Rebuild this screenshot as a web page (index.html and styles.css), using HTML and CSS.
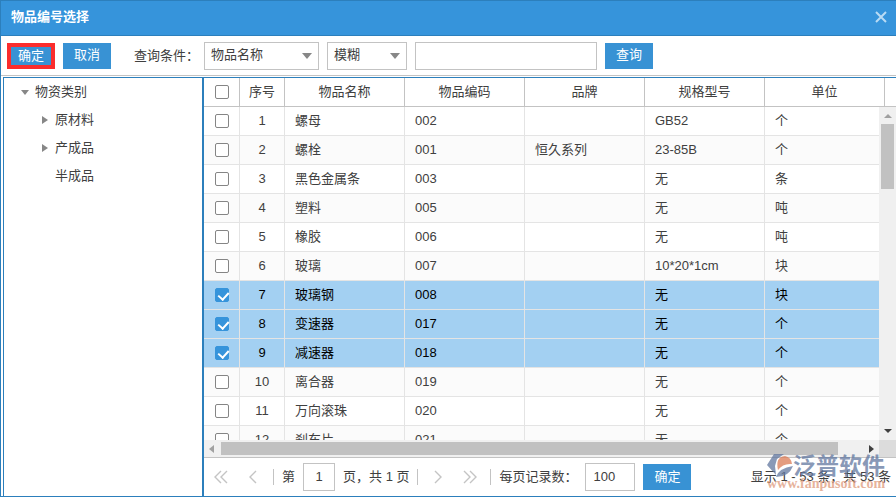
FILE: index.html
```html
<!DOCTYPE html>
<html lang="zh-CN">
<head>
<meta charset="UTF-8">
<meta name="viewport" content="width=device-width,initial-scale=1">
<title>物品编号选择</title>
<link rel="stylesheet" href="styles.css">
</head>
<body>

<div class="dialog">
  <header class="title">
    <h1>物品编号选择</h1>
    <button class="close" aria-label="关闭"><svg width="12" height="12" viewBox="0 0 12 12"><path d="M1 1L11 11M11 1L1 11"/></svg></button>
  </header>

  <form class="toolbar" onsubmit="return false">
    <button class="btn marked">确定</button>
    <button class="btn" type="button">取消</button>
    <label class="query" for="field">查询条件：</label>
    <span class="drop wide"><select id="field"><option>物品名称</option><option>物品编码</option><option>品牌</option></select></span>
    <span class="drop"><select id="mode" aria-label="匹配方式"><option>模糊</option><option>精确</option></select></span>
    <input class="box keyword" type="text" aria-label="关键字">
    <button class="btn" type="button">查询</button>
  </form>

  <div class="main">
    <!-- category tree -->
    <nav class="tree">
      <a class="node open" href="#">物资类别</a>
      <a class="node child" href="#">原材料</a>
      <a class="node child" href="#">产成品</a>
      <a class="node child leaf" href="#">半成品</a>
    </nav>

    <section class="list">
      <div class="head">
        <table>
          <colgroup><col class="c-check"><col class="c-no"><col><col><col><col><col></colgroup>
          <thead><tr><th><input type="checkbox" id="all" aria-label="全选"></th><th>序号</th><th>物品名称</th><th>物品编码</th><th>品牌</th><th>规格型号</th><th>单位</th></tr></thead>
        </table>
      </div>

      <div class="view">
        <div class="rows">
          <table>
            <colgroup><col class="c-check"><col class="c-no"><col><col><col><col><col></colgroup>
            <tbody id="rows"></tbody>
          </table>
        </div>
        <div class="vbar"><i class="arrow up off"></i><div class="thumb"></div><i class="arrow down"></i></div>
        <div class="hbar"><i class="arrow left off"></i><div class="thumb"></div><i class="arrow right"></i></div>
        <div class="corner"></div>
      </div>

      <footer class="pager">
        <button class="nav" aria-label="首页"><svg width="14" height="14" viewBox="0 0 14 14"><path d="M7 1L1 7L7 13M13 1L7 7L13 13"/></svg></button>
        <button class="nav" aria-label="上一页"><svg width="14" height="14" viewBox="0 0 14 14"><path d="M10 1L4 7L10 13"/></svg></button>
        <i class="sep"></i>
        <label for="page">第</label>
        <input class="box page" id="page" type="text" value="1">
        <span>页，共 1 页</span>
        <i class="sep"></i>
        <button class="nav" aria-label="下一页"><svg width="14" height="14" viewBox="0 0 14 14"><path d="M4 1L10 7L4 13"/></svg></button>
        <button class="nav" aria-label="末页"><svg width="14" height="14" viewBox="0 0 14 14"><path d="M1 1L7 7L1 13M7 1L13 7L7 13"/></svg></button>
        <i class="sep"></i>
        <label class="size-label" for="size">每页记录数：</label>
        <input class="box size" id="size" type="text" value="100">
        <button class="btn">确定</button>
        <span class="total">显示 1 - 53 条，共 53 条</span>
      </footer>
    </section>
  </div>

  <!-- watermark -->
  <div class="brand">
    <svg width="26" height="24" viewBox="0 0 26 24">
      <path class="b1" d="M7 0H17L10 5L8 12L9 21L0 11Z"/>
      <path class="b2" d="M11 16Q8 3 18 2Q24 3 25 10Q16 9 11 16Z"/>
      <path class="b1" d="M26 12Q22 23 9 23Q12 14 26 12Z"/>
    </svg>
    <b>泛普软件</b>
    <span>www.fanpusoft.com</span>
  </div>
</div>

<script>
/* ------------ data ------------ */
const items=[
  ['螺母','002','','GB52','个'],
  ['螺栓','001','恒久系列','23-85B','个'],
  ['黑色金属条','003','','无','条'],
  ['塑料','005','','无','吨'],
  ['橡胶','006','','无','吨'],
  ['玻璃','007','','10*20*1cm','块'],
  ['玻璃钢','008','','无','块'],
  ['变速器','017','','无','个'],
  ['减速器','018','','无','个'],
  ['离合器','019','','无','个'],
  ['万向滚珠','020','','无','个'],
  ['刹车片','021','','无','个']
];
const picked=[7,8,9];

/* ------------ build rows ------------ */
const rows=document.getElementById('rows');
items.forEach((item,i)=>{
  const no=i+1,on=picked.includes(no);
  const tr=document.createElement('tr');
  tr.classList.toggle('on',on);
  tr.innerHTML=`<td><input type="checkbox" aria-label="${item[0]}"${on?' checked':''}></td><td>${no}</td>`+item.map(v=>`<td>${v}</td>`).join('');
  tr.querySelector('input').onchange=e=>tr.classList.toggle('on',e.target.checked);
  rows.appendChild(tr);
});
document.getElementById('all').onchange=e=>{
  rows.querySelectorAll('input').forEach(c=>{c.checked=e.target.checked;c.onchange({target:c})});
};
</script>
</body>
</html>
```
FILE: styles.css
```css
:root{
  --blue:#3694db;
  --btn:#3892d4;
  --edge:#2c7fbc;
  --line:#c3c3c3;
  --text:#404040;
}
*{box-sizing:border-box;margin:0;padding:0}
body{font:13px/20px "Liberation Sans","Noto Sans CJK SC",sans-serif;color:var(--text);background:#fff;padding-bottom:1px}
button,input,select{font:inherit;color:inherit}
button{border:none;background:none;cursor:pointer}

.dialog{position:relative;height:calc(100vh - 1px);display:flex;flex-direction:column;border:1px solid var(--edge);border-right:none;overflow:hidden}
.title{display:flex;align-items:center;justify-content:space-between;height:35px;flex:none;padding:0 9px 2px 10px;background:var(--blue);border-bottom:1px solid var(--edge);color:#fff}
h1{font-size:13px;font-weight:700}
.close{display:flex}
.close svg{stroke:#b9dbf4;stroke-width:2;fill:none}

/* ── toolbar ── */
.toolbar{display:flex;align-items:center;gap:8px;height:40px;flex:none;padding:0 6px;border-bottom:1px solid var(--line)}
.btn{width:48px;height:26px;flex:none;padding-bottom:1px;background:var(--btn);color:#fff}
.marked{border:4px solid #fb2d2d;line-height:18px}
.query{width:77px;padding-left:15px;white-space:nowrap}
.drop{position:relative;width:80px}
.drop.wide{width:115px}
.drop select{display:block;width:100%;height:28px;padding:0 6px 1px;border:1px solid var(--line);background:#fff;appearance:none}
.drop::after{content:"";position:absolute;right:7px;top:11px;border:5px solid transparent;border-top:6px solid #878787;border-bottom:none;pointer-events:none}
.box{height:28px;padding:0 7px 2px;border:1px solid var(--line);background:#fff}
.keyword{width:182px}

/* ── tree ── */
.main{display:flex;flex:1;min-height:0;margin:1px 0 0 2px;border-top:1px solid var(--edge);border-left:1px solid var(--edge)}
.tree{width:200px;flex:none;border-right:2px solid var(--edge)}
.node{display:flex;align-items:center;height:28px;padding-left:17px;color:inherit;text-decoration:none}
.node::before{content:"";margin-right:7px;border:4px solid transparent;border-left:6px solid #878787;border-right:none}
.node.open::before{margin-right:6px;border:4px solid transparent;border-top:5px solid #878787;border-bottom:none}
.node.child{padding-left:38px}
.node.leaf::before{border-color:transparent}

/* ── grid ── */
.list{flex:1;min-width:0;display:flex;flex-direction:column}
.head{height:29px;flex:none;border-bottom:1px solid var(--line);overflow:hidden}
table{width:681px;table-layout:fixed;border-collapse:separate;border-spacing:0}
.c-check{width:36px}
.c-no{width:45px}
th{height:28px;font-weight:400;border-right:1px solid var(--line)}
td{height:29px;padding:0 10px 1px;border-right:1px solid #e4e4e4;border-bottom:1px solid #e4e4e4;white-space:nowrap}
td:first-child{padding:0}
td:first-child,td:nth-child(2){text-align:center}
tr:nth-child(even) td{background:#fbfbfb}
tr.on td{background:#a3d0f2;color:#000}
input[type=checkbox]{display:block;width:14px;height:14px;margin:0 auto;appearance:none;border:1px solid #858585;border-radius:2px;background:#fff;position:relative}
input[type=checkbox]:checked{background:var(--blue);border-color:var(--blue)}
input[type=checkbox]:checked::after{content:"";position:absolute;left:4px;top:1px;width:5px;height:8px;border:solid #fff;border-width:0 2px 2px 0;transform:rotate(42deg)}

.view{flex:1;min-height:0;display:grid;grid-template:minmax(0,1fr) 17px/minmax(0,1fr) 17px}
.rows{overflow:hidden}
.vbar,.hbar{display:flex;align-items:center;justify-content:space-between;background:#f0f0f0}
.vbar{flex-direction:column;padding:7px 0}
.hbar{padding:0 5px}
.thumb{background:#c1c1c1}
.vbar .thumb{width:13px;height:65px;margin:6px 0 auto}
.hbar .thumb{height:13px;flex:1;margin:0 31px 0 7px}
.corner{background:#dcdcdc}
.arrow{border:4px solid transparent;--c:#404040}
.arrow.off{--c:#a0a0a0}
.up{border-bottom-color:var(--c);border-top:none}
.down{border-top-color:var(--c);border-bottom:none}
.left{border-right:5px solid var(--c);border-left:none}
.right{border-left:5px solid var(--c);border-right:none}

/* ── pager ── */
.pager{display:flex;align-items:center;gap:8px;height:39px;flex:none;padding:0 5px 0 9px;border-top:1px solid var(--line);white-space:nowrap}
.nav{display:flex;width:16px;justify-content:center;margin-right:8px}
.nav svg{fill:none;stroke:#c4c4c4;stroke-width:1.4}
.sep{width:1px;height:16px;background:var(--line)}
.nav+.sep{margin-left:-4px}
.sep+.nav{margin-left:4px}
.page{width:32px;text-align:center}
.size-label{width:78px}
.size{width:50px}
.total{margin-left:auto}

/* ── watermark ── */
.brand{position:absolute;right:3px;bottom:6px;width:126px;display:flex;flex-wrap:wrap;pointer-events:none;opacity:.75}
.b1{fill:#62779f}
.b2{fill:#dc7b55}
.brand b{font-size:23px;line-height:24px;color:#62779f}
.brand span{width:100%;font:700 14px/12px "Liberation Serif",serif;color:#e09a7c}
```
